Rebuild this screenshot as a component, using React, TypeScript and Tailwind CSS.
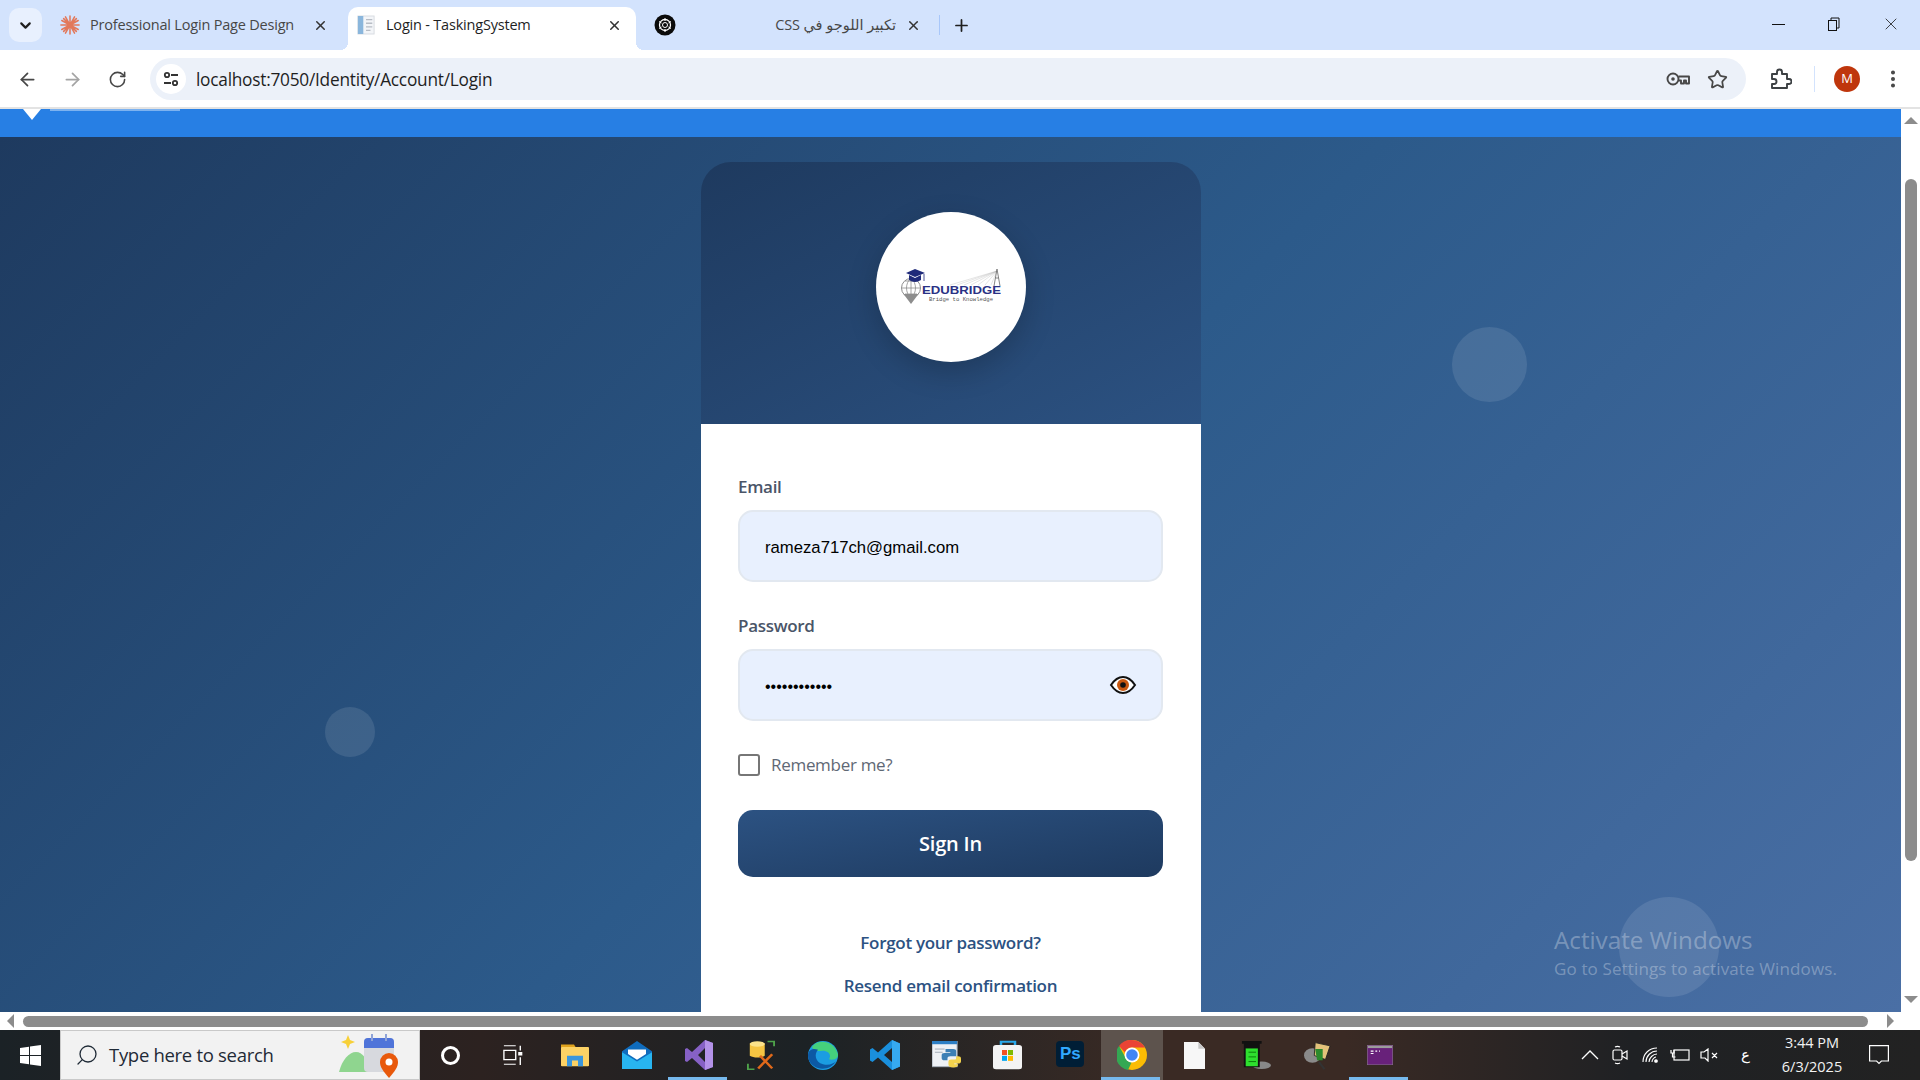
import { ReactNode } from 'react';
import { ArrowLeft, ArrowRight, ChevronDown, EllipsisVertical, Plus, RotateCw, Search, Star, X } from 'lucide-react';

const Tab: React.FC<{ icon: ReactNode; title: string; active?: boolean; rtl?: boolean; className: string }> = ({ icon, title, active, rtl, className }) => (
  <div className={`relative flex h-[43px] shrink-0 items-center pb-[7px] ${className} ${active ? 'rounded-t-[10px] bg-white text-[#1f1f1f]' : 'text-[#474747]'}`}>
    {active && <div className="absolute bottom-0 left-[-8px] h-[8px] w-[8px] bg-[radial-gradient(circle_at_0_0,transparent_8px,#fff_8px)]" />}
    {active && <div className="absolute bottom-0 right-[-8px] h-[8px] w-[8px] bg-[radial-gradient(circle_at_100%_0,transparent_8px,#fff_8px)]" />}
    <span className="mr-[8px] flex w-[24px] shrink-0 justify-center">{icon}</span>
    <span dir={rtl ? 'rtl' : 'ltr'} className="flex-1 overflow-hidden text-[14.500px] whitespace-nowrap tracking-[-0.2px]">{title}</span>
    <X className="ml-[10px] shrink-0 text-[#333]" size={15} strokeWidth={2.4} />
  </div>
);

const ClaudeIcon = () => (
  <svg width="20" height="20" viewBox="0 0 22 22" stroke="#e2785a" strokeWidth="1.700" strokeLinecap="round">
    <path d="M11 1v20M1 11h20M4 4l14 14M18 4L4 18M6 2l10 18M16 2L6 20M2 6l18 10M20 6L2 16" />
  </svg>
);

const DocIcon = () => (
  <svg width="18" height="22" viewBox="0 0 20 22">
    <rect x="1" y="1" width="18" height="20" fill="#f3f5f8" stroke="#d5d9df" />
    <rect x="1" y="1" width="6" height="20" fill="#8ab6dc" />
    <path d="M10 5h7M10 9h7M10 13h7M10 17h5" stroke="#b8bdc5" strokeWidth="1.500" />
  </svg>
);

const GptIcon = () => (
  <svg width="22" height="22" viewBox="0 0 22 22">
    <circle cx="11" cy="11" r="10.500" fill="#0b0b0b" />
    <circle cx="11" cy="11" r="5.500" fill="none" stroke="#fff" strokeWidth="1.300" />
    <circle cx="11" cy="11" r="2.500" fill="none" stroke="#fff" strokeWidth="1" />
    <path d="M11 4v3M11 15v3M5 7.500l2.500 1.500M14.500 13l2.500 1.500M5 14.500L7.500 13M14.500 9L17 7.500" stroke="#fff" strokeWidth="1" />
  </svg>
);

const ExtensionIcon = () => (
  <svg width="24" height="24" viewBox="0 0 24 24" fill="none" stroke="#3c4043" strokeWidth="1.900" strokeLinejoin="round">
    <path d="M4 7h5V5a2.500 2.500 0 0 1 5 0v2h5v5h2a2.500 2.500 0 0 1 0 5h-2v4H4v-4h2a2.500 2.500 0 0 0 0-5H4z" />
  </svg>
);

const KeyIcon = () => (
  <svg className="ml-auto" width="24" height="16" viewBox="0 0 24 16" fill="none" stroke="#474747" strokeWidth="1.900">
    <circle cx="7" cy="8" r="5.500" />
    <circle cx="7" cy="8" r="1.800" fill="#474747" stroke="none" />
    <path d="M12.500 5.500H23v7h-3v-3h-2v3h-3v-3h-2.500" strokeLinejoin="round" />
  </svg>
);

const BrowserChrome = () => (
  <header className="shrink-0">
    <div className="flex h-[50px] items-end bg-[#d3e3fd] pl-[9px]">
      <div className="mb-[8px] mr-[3px] flex h-[34px] w-[33px] items-center justify-center rounded-[10px] bg-[#e8f0fe]">
        <ChevronDown size={17} strokeWidth={3} className="text-[#1f1f1f]" />
      </div>
      <Tab className="w-[303px] pl-[13px] pr-[20px]" icon={<ClaudeIcon />} title="Professional Login Page Design" />
      <Tab className="w-[288px] pl-[6px] pr-[14px]" active icon={<DocIcon />} title="Login - TaskingSystem" />
      <Tab className="w-[293px] pl-[17px] pr-[8px]" rtl icon={<GptIcon />} title="تكبير اللوجو في CSS" />
      <div className="mb-[15px] ml-[10px] h-[20px] w-px bg-[#a8c7fa]" />
      <div className="mb-[15px] ml-[11px] flex w-[20px] justify-center">
        <Plus size={19} strokeWidth={2.200} className="text-[#1f1f1f]" />
      </div>
      <div className="mb-[16px] ml-auto flex items-center text-[#1f1f1f]">
        <div className="flex w-[56px] justify-center"><div className="h-px w-[13px] bg-[#111]" /></div>
        <div className="flex w-[56px] justify-center">
          <svg width="14" height="14" viewBox="0 0 14 14" fill="none" stroke="#111"><rect x="1.500" y="3.500" width="8" height="10" /><path d="M4 3V1h8v10h-2" /></svg>
        </div>
        <div className="flex w-[58px] justify-center"><X size={20} strokeWidth={1} /></div>
      </div>
    </div>
    <div className="flex h-[57px] items-center rounded-t-[8px] bg-white pt-[1px]">
      <div className="flex w-[150px] shrink-0 items-center pl-[17px] text-[#474747]">
        <ArrowLeft size={21} strokeWidth={2} />
        <ArrowRight size={21} strokeWidth={2} className="ml-[24px] text-[#a4a4a4]" />
        <RotateCw size={19} strokeWidth={2} className="ml-[25px]" />
      </div>
      <div className="flex h-[42px] w-[1596px] items-center rounded-full bg-[#ecf1f9] pl-[6px] pr-[18px]">
        <div className="flex h-[30px] w-[30px] items-center justify-center rounded-full bg-white">
          <svg width="18" height="18" viewBox="0 0 18 18" fill="none" stroke="#333" strokeWidth="1.800">
            <circle cx="5" cy="5" r="2.200" /><path d="M9 5h7M2 13h7" /><circle cx="13" cy="13" r="2.200" />
          </svg>
        </div>
        <span className="ml-[10px] mt-[1px] text-[17.300px] tracking-[-0.25px] text-[#1f1f1f]">localhost:7050/Identity/Account/Login</span>
        <KeyIcon />
        <Star size={21} strokeWidth={2} className="ml-[17px] text-[#474747]" />
      </div>
      <div className="ml-[22px] flex items-center">
        <ExtensionIcon />
        <div className="ml-[22px] h-[26px] w-px bg-[#d3e3fd]" />
        <div className="ml-[19px] flex h-[26px] w-[26px] items-center justify-center rounded-full bg-[#bf360c] text-[13px] text-white">M</div>
        <EllipsisVertical size={22} strokeWidth={2.400} className="ml-[22px] text-[#474747]" />
      </div>
    </div>
    <div className="h-[2px] bg-[#e3e3e3]" />
  </header>
);

const Logo = () => (
  <svg width="100" height="38" viewBox="0 0 100 38">
    <path d="M96 3L49 17M96 3L56 17M96 3L63 17M96 3L70 17M96 3L77 17M96 3L84 17M96 3L90 17" stroke="#a5a5a5" strokeWidth="0.300" />
    <path d="M93 18L96 1L99 18M94.500 10h3" fill="none" stroke="#666" strokeWidth="0.800" />
    <circle cx="10" cy="20" r="9.500" fill="#fff" stroke="#8d8d8d" strokeWidth="1" />
    <path d="M1 20h18M10 10v20M4 13h12M4 26h12M10 10c-6 5-6 15 0 20M10 10c6 5 6 15 0 20" fill="none" stroke="#8d8d8d" strokeWidth="0.800" />
    <path d="M2.500 26L10 36L17.500 26z" fill="#8d8d8d" />
    <path d="M5 5L14 1L24 5L14 9z" fill="#1f2a7a" />
    <path d="M8 7v5c4 2.500 8 2.500 12 0V7l-6 3z" fill="#1f2a7a" />
    <path d="M23 6v7" stroke="#1f2a7a" strokeWidth="0.800" />
    <text x="21" y="26" fontFamily="Liberation Sans, sans-serif" fontWeight="700" fontSize="11" textLength="79" lengthAdjust="spacingAndGlyphs" fill="#2a3184">EDUBRIDGE</text>
    <text x="28" y="32.500" fontFamily="Liberation Mono, monospace" fontSize="5.600" textLength="64" lengthAdjust="spacingAndGlyphs" fill="#555">Bridge to Knowledge</text>
  </svg>
);

const EyeIcon = () => (
  <svg width="28" height="20" viewBox="0 0 28 20">
    <path d="M2 10C6 4 10 2 14 2s8 2 12 8c-4 6-8 8-12 8s-8-2-12-8z" fill="#fff" stroke="#111" strokeWidth="2" />
    <circle cx="14" cy="10" r="6" fill="#c8570f" />
    <circle cx="14" cy="10" r="2.800" fill="#111" />
  </svg>
);

const LoginCard = () => (
  <div className="w-[500px] shrink-0 overflow-hidden rounded-t-[30px]">
    <div className="flex h-[262px] justify-center bg-gradient-to-br from-[#1e3a5f] to-[#2c5282] pt-[50px]">
      <div className="flex h-[150px] w-[150px] items-center justify-center rounded-full bg-white shadow-[0_10px_30px_rgba(0,0,0,0.2)]">
        <Logo />
      </div>
    </div>
    <form className="flex flex-col bg-white pb-[100px] pl-[37px] pr-[38px] pt-[50px] font-['Open_Sans',sans-serif]">
      <label className="mb-[10px] text-[17px] leading-[26px] font-semibold tracking-[-0.3px] text-[#4a5568]">Email</label>
      <input readOnly value="rameza717ch@gmail.com" className="h-[72px] w-full rounded-[15px] border-2 border-[#e2e8f0] bg-[#e8f0fe] pl-[25px] pr-[25px] pt-[4px] font-['Liberation_Sans',sans-serif] text-[16.700px] text-black outline-none" />
      <label className="mb-[10px] mt-[31px] text-[17px] leading-[26px] font-semibold tracking-[-0.3px] text-[#4a5568]">Password</label>
      <div className="relative">
        <input readOnly type="password" value="Password1234" className="h-[72px] w-full rounded-[15px] border-2 border-[#e2e8f0] bg-[#e8f0fe] pl-[25px] pr-[25px] pt-[4px] font-['Liberation_Sans',sans-serif] text-[16px] text-black outline-none" />
        <span className="absolute right-[26px] top-[26px]"><EyeIcon /></span>
      </div>
      <div className="mt-[33px] flex items-center">
        <input type="checkbox" className="h-[22px] w-[22px] appearance-none rounded-[3px] border-2 border-[#767676] bg-white" />
        <span className="ml-[11px] text-[17px] leading-[22px] tracking-[-0.3px] text-[#5f6875]">Remember me?</span>
      </div>
      <button type="button" className="mt-[34px] h-[67px] w-full rounded-[15px] bg-gradient-to-br from-[#2c5282] to-[#1e3a5f] pt-[1px] text-[20px] font-semibold tracking-[-0.2px] text-white">Sign In</button>
      <div className="mt-[54px] flex flex-col items-center gap-[19px] text-[17px] leading-[24px] font-semibold tracking-[-0.3px] text-[#2c5282]">
        <a>Forgot your password?</a>
        <a>Resend email confirmation</a>
      </div>
    </form>
  </div>
);

const Page = () => (
  <div className="flex min-h-0 flex-1">
    <div className="relative flex min-w-0 flex-1 flex-col overflow-hidden">
      <nav className="relative h-[28px] shrink-0 bg-[#277fe4]">
        <div className="absolute left-[23px] top-0 h-0 w-0 border-x-[9px] border-t-[11px] border-x-transparent border-t-white" />
        <div className="absolute left-[50px] top-0 h-[2px] w-[130px] bg-white/40" />
      </nav>
      <main className="flex min-h-0 flex-1 justify-center overflow-hidden bg-[linear-gradient(135deg,#1e3a5f_0%,#2c5a8a_50%,#4a6fa5_100%)] pl-[1px] pt-[25px]">
        <LoginCard />
      </main>
      <div className="absolute left-[1452px] top-[218px] h-[75px] w-[75px] rounded-full bg-white/10" />
      <div className="absolute left-[325px] top-[598px] h-[50px] w-[50px] rounded-full bg-white/10" />
      <div className="absolute left-[1619px] top-[788px] h-[100px] w-[100px] rounded-full bg-white/10" />
      <div className="pointer-events-none absolute left-[1554px] top-[814px] font-['Open_Sans',sans-serif] text-white/30">
        <div className="text-[24.200px] leading-[34px]">Activate Windows</div>
        <div className="text-[17px] leading-[24px] tracking-[0.13px]">Go to Settings to activate Windows.</div>
      </div>
    </div>
    <div className="flex w-[19px] shrink-0 flex-col items-center bg-white pt-[8px]">
      <div className="h-0 w-0 border-x-[7px] border-b-[7px] border-x-transparent border-b-[#8c8c8c]" />
      <div className="mt-[55px] h-[682px] w-[12px] rounded-full bg-[#8c8c8c]" />
      <div className="mt-[135px] h-0 w-0 border-x-[7px] border-t-[7px] border-x-transparent border-t-[#8c8c8c]" />
    </div>
  </div>
);

const HScrollbar = () => (
  <div className="flex h-[18px] shrink-0 items-center bg-white">
    <div className="ml-[7px] h-0 w-0 border-y-[7px] border-r-[7px] border-y-transparent border-r-[#8c8c8c]" />
    <div className="ml-[9px] h-[11px] w-[1845px] rounded-full bg-[#8c8c8c]" />
    <div className="ml-[19px] h-0 w-0 border-y-[7px] border-l-[7px] border-y-transparent border-l-[#8c8c8c]" />
  </div>
);

const TaskIcon: React.FC<{ children: ReactNode; active?: boolean; running?: boolean }> = ({ children, active, running }) => (
  <div className={`relative flex h-[50px] w-[61.950px] shrink-0 items-center justify-center ${active ? 'bg-[#5d534d]' : ''}`}>
    {children}
    {running && <div className="absolute bottom-0 left-0 right-[3px] h-[3px] bg-[#76b9ed]" />}
  </div>
);

const taskIcons: { key: string; node: ReactNode; active?: boolean; running?: boolean }[] = [
  { key: 'cortana', node: <div className="h-[19px] w-[19px] rounded-full border-[3px] border-white" /> },
  {
    key: 'taskview',
    node: (
      <svg width="20" height="20" viewBox="0 0 22 26" preserveAspectRatio="none" fill="none" stroke="#fff" strokeWidth="1.500">
        <path d="M1 1h13M1 25h13M1 7h13v12H1zM19 1v6M19 16v10" /><path d="M17.500 10h3v3h-3z" fill="#fff" />
      </svg>
    ),
  },
  {
    key: 'explorer',
    node: (
      <svg width="28" height="24" viewBox="0 0 28 30" preserveAspectRatio="none">
        <path d="M0 2h13l2 4H0z" fill="#e0a31e" /><rect y="5" width="28" height="24" rx="1" fill="#fcd265" /><path d="M6 16h16v13h-5v-7h-6v7H6z" fill="#3a96dd" />
      </svg>
    ),
  },
  {
    key: 'mail',
    node: (
      <svg width="30" height="28" viewBox="0 0 30 30" preserveAspectRatio="none">
        <path d="M15 0L30 11v19H0V11z" fill="#0f6cbd" /><path d="M0 12l15 10 15-10v18H0z" fill="#28b5f0" /><path d="M6 9h18v5l-9 6-9-6z" fill="#fff" />
      </svg>
    ),
  },
  {
    key: 'vs',
    running: true,
    node: (
      <svg width="28" height="30" viewBox="0 0 28 30">
        <path d="M20 0l8 3v24l-8 3L7 18l-5 4-2-1V9l2-1 5 4zM20 8l-7 7 7 7z" fill="#8661c5" /><path d="M20 0l8 3v24l-8 3z" fill="#b392e8" />
      </svg>
    ),
  },
  {
    key: 'tools',
    node: (
      <svg width="28" height="30" viewBox="0 0 30 38" preserveAspectRatio="none" fill="none">
        <path d="M22 2h7v6M1 30v7h7" stroke="#4ea24a" strokeWidth="2" /><path d="M3 4h16v16c-4 3-12 3-16 0z" fill="#f5c542" /><ellipse cx="11" cy="5" rx="8" ry="3.500" fill="#fbe38a" /><path d="M12 36l15-18M27 36L14 20" stroke="#e0691a" strokeWidth="2.800" />
      </svg>
    ),
  },
  {
    key: 'edge',
    node: (
      <svg width="30" height="29" viewBox="0 0 30 30" preserveAspectRatio="none">
        <circle cx="15" cy="15" r="15" fill="#1b9de2" /><path d="M4 6C9-2 26-2 30 14c0 5-5 6-9 5 3-5-1-9-6-9C10 10 6 12 4 6z" fill="#45d07c" /><path d="M0 15c0-6 5-8 10-6-4 4-3 13 5 15 6 2 11-1 13-3-4 7-12 9-18 7C4 26 0 21 0 15z" fill="#0c59a4" />
      </svg>
    ),
  },
  {
    key: 'vscode',
    node: (
      <svg width="30" height="30" viewBox="0 0 30 30">
        <path d="M22 0l8 3.500v23L22 30 8 17.500 2.500 22 0 20.500v-11L2.500 8 8 12.500zM22 8l-8 7 8 7z" fill="#1a8fdc" /><path d="M22 0l8 3.500v23L22 30z" fill="#36a9ef" />
      </svg>
    ),
  },
  {
    key: 'python',
    node: (
      <svg width="29" height="29" viewBox="0 0 30 36" preserveAspectRatio="none">
        <rect width="26" height="32" fill="#eef1f5" stroke="#9aa4b0" /><rect width="26" height="4" fill="#2d7fc5" /><path d="M3 10h10M3 14h8" stroke="#9aa4b0" />
        <path d="M14 10h8c2 0 3 1 3 3v6h-6c-2 0-3 1-3 3v2h-3c-2 0-3-1-3-3v-3c0-2 1-3 3-3h6v-1h-5z" fill="#3c7fb5" /><path d="M25 19h2c2 0 3 1 3 3v3c0 2-1 3-3 3h-4v1h4c0 3-2 4-5 4s-5-1-5-4v-3c0-2 1-3 3-3h4c1 0 1-1 1-4z" fill="#f4d34d" />
      </svg>
    ),
  },
  {
    key: 'store',
    node: (
      <svg width="30" height="30" viewBox="0 0 30 36" preserveAspectRatio="none">
        <path d="M8 8V2h14v6" fill="none" stroke="#28a8ea" strokeWidth="2.500" /><rect y="6" width="29" height="29" rx="3" fill="#f3f3f3" />
        <rect x="9" y="12" width="5" height="6" fill="#f25022" /><rect x="15" y="12" width="5" height="6" fill="#7fba00" /><rect x="9" y="19" width="5" height="6" fill="#00a4ef" /><rect x="15" y="19" width="5" height="6" fill="#ffb900" />
      </svg>
    ),
  },
  {
    key: 'ps',
    node: <div className="mb-[3px] flex h-[26px] w-[28px] items-center justify-center rounded-[4px] bg-[#001e36] font-['Liberation_Sans',sans-serif] text-[17px] font-bold text-[#31a8ff]">Ps</div>,
  },
  {
    key: 'chrome',
    active: true,
    running: true,
    node: (
      <svg width="30" height="30" viewBox="0 0 30 30">
        <circle cx="15" cy="15" r="15" fill="#fbbc04" /><path d="M15 0a15 15 0 0 1 13 7.500H15a7.500 7.500 0 0 0-7 5L2 6A15 15 0 0 1 15 0z" fill="#ea4335" /><path d="M2 6l6.500 11.500a7.500 7.500 0 0 0 6 5L11 30A15 15 0 0 1 2 6z" fill="#34a853" />
        <circle cx="15" cy="15" r="7.500" fill="#fff" /><circle cx="15" cy="15" r="5.800" fill="#4285f4" />
      </svg>
    ),
  },
  {
    key: 'file',
    node: (
      <svg width="21" height="27" viewBox="0 0 22 28" preserveAspectRatio="none">
        <path d="M0 0h15l7 7v21H0z" fill="#f7f7f7" /><path d="M15 0l7 7h-7z" fill="#c8c8c8" />
      </svg>
    ),
  },
  {
    key: 'beaker',
    node: (
      <svg width="30" height="30" viewBox="0 0 32 32">
        <ellipse cx="22" cy="27" rx="10" ry="4" fill="#888" /><path d="M1 1h21v3h-2v25H3V4H1z" fill="#111" /><rect x="5" y="9" width="13" height="19" fill="#2ee02e" /><path d="M8 13h8M8 18h8M8 23h8" stroke="#0a7a0a" />
      </svg>
    ),
  },
  {
    key: 'search-mail',
    node: (
      <svg width="28" height="29" viewBox="0 0 30 36" preserveAspectRatio="none">
        <circle cx="9" cy="18" r="9" fill="#8a8a8a" /><path d="M12 2l16 4-5 17-12-5z" fill="#e3c27a" stroke="#222" /><path d="M12 10h8v14h-6z" fill="#2c8a2c" /><path d="M16 26l6 9" stroke="#333" strokeWidth="2.500" />
      </svg>
    ),
  },
  {
    key: 'terminal',
    running: true,
    node: (
      <svg width="26" height="20" viewBox="0 0 28 26" preserveAspectRatio="none">
        <rect width="28" height="26" fill="#68217a" stroke="#8a8a8a" /><rect x="1" y="1" width="26" height="3" fill="#9c9c9c" /><path d="M4 8h3M9 8h2M13 8h1M4 11h3" stroke="#fff" strokeWidth="1.500" />
      </svg>
    ),
  },
];

const TrayIcons = () => (
  <div className="ml-auto flex h-full items-center text-white">
    <svg width="18" height="10" viewBox="0 0 18 10" fill="none" stroke="#fff" strokeWidth="1.300"><path d="M1 9l8-8 8 8" /></svg>
    <svg className="ml-[13px]" width="16" height="20" viewBox="0 0 16 20" fill="none" stroke="#fff" strokeWidth="1.200">
      <rect x="1" y="5" width="9" height="10" rx="1.500" /><path d="M10 9l5-3v8l-5-3M3 2c2-1 3-1 5 0M3 18c2 1 3 1 5 0" />
    </svg>
    <svg className="ml-[14px]" width="16" height="16" viewBox="0 0 16 16" fill="none" stroke="#fff" strokeWidth="1.100">
      <path d="M1 15C1 7 7 1 15 1M4 15C4 9 9 4 15 4M7 15c0-4 4-8 8-8M10 15c0-2 2-5 4-5" /><circle cx="14" cy="14" r="1.300" fill="#fff" />
    </svg>
    <svg className="ml-[12px]" width="20" height="12" viewBox="0 0 20 12" fill="none" stroke="#fff" strokeWidth="1.200">
      <rect x="4" y="1" width="15" height="10" /><path d="M1 1v3h3V1M2.500 4v4h3" />
    </svg>
    <svg className="ml-[10px]" width="19" height="14" viewBox="0 0 19 14" fill="none" stroke="#fff" strokeWidth="1.200">
      <path d="M1 4h3l4-3v12l-3-3H1zM12 5l5 5M17 5l-5 5" />
    </svg>
    <span className="ml-[22px] w-[12px] font-['DejaVu_Sans',sans-serif] text-[15px]">ع</span>
    <div className="ml-[14px] w-[90px] text-center text-[14.500px] leading-[24px] text-[#f2f2f2]">
      <div>3:44 PM</div>
      <div>6/3/2025</div>
    </div>
    <svg className="ml-[12px] mr-[31px]" width="20" height="20" viewBox="0 0 20 20" fill="none" stroke="#fff" strokeWidth="1.200">
      <path d="M.6.6h18.800v15.400h-7l-2.400 2.500-2.400-2.500h-7z" />
    </svg>
  </div>
);

const Taskbar = () => (
  <footer className="flex h-[50px] shrink-0 items-center bg-[linear-gradient(90deg,#1b2226_0%,#2c2220_25%,#1c2225_42%,#3a2a24_60%,#3a2a24_70%,#1f2124_85%,#222_100%)] font-['Open_Sans',sans-serif]">
    <div className="flex h-full w-[60px] shrink-0 items-center justify-center">
      <svg width="21" height="21" viewBox="0 0 21 21" fill="#fff"><path d="M0 3l9-1.300V10H0zM10 1.500L21 0v10H10zM0 11h9v8.300L0 18zM10 11h11v10l-11-1.500z" /></svg>
    </div>
    <div className="flex h-full w-[360px] shrink-0 items-center border border-[#c9c9c9] bg-[#f2f2f2] pl-[14px] pr-[18px] text-[#1f2a36]">
      <Search size={24} strokeWidth={1.300} className="-scale-x-100" />
      <span className="ml-[10px] text-[18.500px] tracking-[-0.3px]">Type here to search</span>
      <svg className="ml-auto" width="62" height="46" viewBox="0 0 62 46">
        <path d="M7 8l2-5 2 5 5 2-5 2-2 5-2-5-5-2z" fill="#f7d038" /><path d="M0 40C3 28 10 20 17 20s12 8 14 20z" fill="#8fd58f" /><rect x="25" y="6" width="30" height="34" rx="4" fill="#d7d9de" /><path d="M25 16v-6a4 4 0 0 1 4-4h22a4 4 0 0 1 4 4v6z" fill="#4f74d9" /><path d="M33 2v7M47 2v7" stroke="#8ea3d8" strokeWidth="2" />
        <path d="M50 46c-6-7-9-11-9-16a9 9 0 0 1 18 0c0 5-3 9-9 16z" fill="#e8590c" /><circle cx="50" cy="30" r="3.500" fill="#fff" />
      </svg>
    </div>
    <div className="flex shrink-0 items-center">
      {taskIcons.map((icon) => (
        <TaskIcon key={icon.key} active={icon.active} running={icon.running}>{icon.node}</TaskIcon>
      ))}
    </div>
    <TrayIcons />
  </footer>
);

export default function App() {
  return (
    <div className="flex h-[1080px] w-[1920px] flex-col overflow-hidden bg-white font-['Open_Sans','DejaVu_Sans',sans-serif]">
      <BrowserChrome />
      <Page />
      <HScrollbar />
      <Taskbar />
    </div>
  );
}
